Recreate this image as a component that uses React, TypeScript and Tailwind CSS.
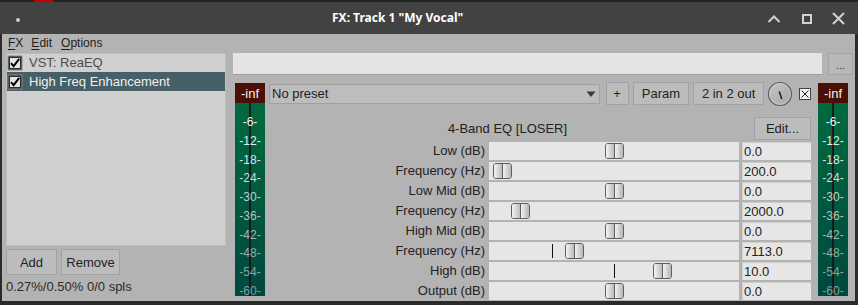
import React from "react";

const meterLabels = ["-6-", "-12-", "-18-", "-24-", "-30-", "-36-", "-42-", "-48-", "-54-", "-60-"];
const meterColors = ["#eef3f0", "#e6eee9", "#dbe6e0", "#cfdcd6", "#c1d1ca", "#b2c4bd", "#a3b7b0", "#96aca5", "#8ca39c", "#869d96"];

function Meter() {
  return (
    <div className="w-[30px] h-[213px] flex flex-col shrink-0">
      <div className="h-[20px] bg-[#4a0f05] text-[#f2f2f2] text-[13px] leading-none flex items-center justify-center">-inf</div>
      <div className="relative flex-1 bg-gradient-to-b from-[#006a3f] to-[#00483f]">
        <div className="absolute left-[14px] top-0 bottom-0 w-[2px] bg-[#1a1a1a]" />
        <div className="absolute left-0 right-0 top-[13px] bottom-[-1px] flex flex-col justify-between items-center">
          {meterLabels.map((l, i) => (
            <div key={l} className="text-[12px] leading-[12px] h-[12px]" style={{ color: meterColors[i] }}>
              {l}
            </div>
          ))}
        </div>
      </div>
    </div>
  );
}

function CheckBox() {
  return (
    <svg width="16" height="16" viewBox="0 0 16 16" className="shrink-0">
      <rect x="0.5" y="0.5" width="15" height="15" fill="#8a8a8a" />
      <rect x="1.5" y="1.5" width="13" height="13" fill="#2e2e2e" />
      <rect x="3" y="3" width="10" height="10" fill="#e4e4e4" />
      <path d="M4 8.2 L6.6 11.2 L12.2 3.8" stroke="#000" strokeWidth="2" fill="none" />
    </svg>
  );
}

type Row = { label: string; value: string; thumb: number; tick?: number };
const rows: Row[] = [
  { label: "Low (dB)", value: "0.0", thumb: 125 },
  { label: "Frequency (Hz)", value: "200.0", thumb: 13 },
  { label: "Low Mid (dB)", value: "0.0", thumb: 125 },
  { label: "Frequency (Hz)", value: "2000.0", thumb: 31 },
  { label: "High Mid (dB)", value: "0.0", thumb: 125 },
  { label: "Frequency (Hz)", value: "7113.0", thumb: 85, tick: 63 },
  { label: "High (dB)", value: "10.0", thumb: 173, tick: 125 },
  { label: "Output (dB)", value: "0.0", thumb: 125 },
];

function Thumb({ center }: { center: number }) {
  return (
    <div
      className="absolute top-[1px] h-[16px] w-[19px] rounded-[3px] border border-[#5e5e5e] flex overflow-hidden"
      style={{ left: center - 9.5 }}
    >
      <div className="flex-1 bg-gradient-to-r from-[#f4f4f4] to-[#bdbdbd]" />
      <div className="w-[1px] bg-[#5e5e5e]" />
      <div className="flex-1 bg-gradient-to-r from-[#f4f4f4] to-[#b5b5b5]" />
    </div>
  );
}

function Button({ children, className }: { children: React.ReactNode; className: string }) {
  return (
    <div
      className={
        "bg-[#bcbcbc] border border-[#a2a2a2] text-[#222] text-[13px] flex items-center justify-center leading-none " +
        className
      }
    >
      {children}
    </div>
  );
}

export default function App() {
  return (
    <div className="w-[858px] h-[305px] bg-[#2b2b2b] flex flex-col overflow-hidden font-['Liberation_Sans',Arial,sans-serif]">
      <div className="h-[2px] bg-[#232323] relative shrink-0">
        <div className="absolute left-[34px] top-0 w-[19px] h-[2px] bg-[#c40000]" />
      </div>
      <div className="h-[32px] bg-[#424242] relative flex items-center pl-[332px] shrink-0">
        <div className="absolute left-[16px] top-[16px] w-[4px] h-[4px] rounded-full bg-[#cfcfcf]" />
        <div className="text-white font-bold text-[12px] font-['Noto_Sans',sans-serif]">FX: Track 1 "My Vocal"</div>
        <svg className="absolute left-[766px] top-[10px]" width="16" height="14" viewBox="0 0 16 14">
          <path d="M2.5 10 L8 4.5 L13.5 10" stroke="#d2d2d2" strokeWidth="2" fill="none" />
        </svg>
        <svg className="absolute left-[800px] top-[10px]" width="14" height="14" viewBox="0 0 14 14">
          <rect x="3" y="3" width="8" height="8" stroke="#d2d2d2" strokeWidth="2" fill="none" />
        </svg>
        <svg className="absolute left-[831px] top-[9px]" width="15" height="15" viewBox="0 0 15 15">
          <path d="M2 2 L13 13 M13 2 L2 13" stroke="#d2d2d2" strokeWidth="2" fill="none" />
        </svg>
      </div>
      <div className="flex-1 bg-[#b3b3b3] ml-[2px] mr-[3px] mb-[4px] flex flex-col">
        <div className="h-[17px] flex items-center text-[12px] text-[#1e1e1e] leading-none">
          <span className="ml-[6px]"><span className="underline underline-offset-2">F</span>X</span>
          <span className="ml-[8px]"><span className="underline underline-offset-2">E</span>dit</span>
          <span className="ml-[9px]"><span className="underline underline-offset-2">O</span>ptions</span>
        </div>
        <div className="flex mt-[2px] pl-[4px] pr-[2px] gap-[7px] flex-1">
          {/* left column */}
          <div className="w-[220px] flex flex-col shrink-0">
            <div className="h-[193px] bg-[#d0d0d0] border border-[#bdbdbd] flex flex-col text-[13px]">
              <div className="h-[18px] flex items-center pl-[0px]">
                <CheckBox />
                <span className="ml-[6px] text-[#4c4c4c]">VST: ReaEQ</span>
              </div>
              <div className="h-[19px] flex items-center bg-[#475f66]">
                <CheckBox />
                <span className="ml-[6px] text-[#f0f0f0]">High Freq Enhancement</span>
              </div>
            </div>
            <div className="flex gap-[4px] mt-[3px] h-[26px]">
              <Button className="w-[51px]">Add</Button>
              <Button className="w-[59px]">Remove</Button>
            </div>
            <div className="mt-[4px] text-[13px] leading-[16px] text-[#2a2a2a]">0.27%/0.50% 0/0 spls</div>
          </div>
          {/* right area */}
          <div className="flex-1 flex flex-col">
            <div className="flex h-[22px] gap-[6px]">
              <div className="flex-1 bg-[#e4e4e4] border-b border-[#9c9c9c]" />
              <div className="w-[25px] bg-[#b8b8b8] border border-[#a4a4a4] text-[#333] text-[11px] flex items-end justify-center pb-[3px] leading-none">...</div>
            </div>
            <div className="flex mt-[7px]">
              <div className="ml-[2px] mt-[1px]">
                <Meter />
              </div>
              <div className="w-[542px] ml-[4px] flex flex-col">
                {/* preset row */}
                <div className="h-[23px] flex items-center">
                  <div className="w-[332px] h-[20px] bg-[#bdbdbd] border border-[#a0a0a0] flex items-center pl-[2px] text-[13px] text-[#222] relative">
                    No preset
                    <svg className="absolute right-[3px] top-[6px]" width="10" height="7" viewBox="0 0 10 7">
                      <path d="M0.5 0.5 L9.5 0.5 L5 6 Z" fill="#3a3a3a" />
                    </svg>
                  </div>
                  <Button className="w-[23px] h-[23px] ml-[6px]">+</Button>
                  <Button className="w-[57px] h-[23px] ml-[4px]">Param</Button>
                  <Button className="w-[71px] h-[23px] ml-[4px]">2 in 2 out</Button>
                  <svg className="ml-[3px] shrink-0" width="26" height="26" viewBox="0 0 26 26">
                    <defs>
                      <linearGradient id="kg" x1="0" y1="0" x2="1" y2="1">
                        <stop offset="0" stopColor="#c6c6c6" />
                        <stop offset="1" stopColor="#a6a6a6" />
                      </linearGradient>
                    </defs>
                    <circle cx="13" cy="13" r="11.5" fill="url(#kg)" stroke="#5c5c5c" strokeWidth="1.2" />
                    <circle cx="13" cy="13" r="10.3" fill="none" stroke="#cfcfcf" strokeWidth="0.8" />
                    <path d="M12.3 10.5 L14.8 18" stroke="#1e1e1e" strokeWidth="1.5" />
                  </svg>
                  <svg className="ml-[6px] shrink-0" width="12" height="12" viewBox="0 0 12 12">
                    <rect x="0.5" y="0.5" width="11" height="11" fill="#f2f2f2" stroke="#444" />
                    <path d="M2.5 2.5 L9.5 9.5 M9.5 2.5 L2.5 9.5" stroke="#222" strokeWidth="1" />
                  </svg>
                </div>
                {/* header */}
                <div className="h-[23px] flex mt-[12px]">
                  <div className="flex-1 flex items-center justify-center pr-[8px] text-[13px] text-[#222]">4-Band EQ [LOSER]</div>
                  <Button className="w-[57px]">Edit...</Button>
                </div>
                {/* rows */}
                <div className="flex flex-col gap-[2px] mt-[2px]">
                  {rows.map((r, i) => (
                    <div key={i} className="h-[18px] flex">
                      <div className="w-[220px] pr-[4px] text-right text-[13px] leading-[18px] text-[#222]">{r.label}</div>
                      <div className="w-[250px] bg-[#e6e6e6] relative">
                        {r.tick !== undefined && (
                          <div className="absolute top-[2px] w-[1px] h-[14px] bg-[#111]" style={{ left: r.tick }} />
                        )}
                        <Thumb center={r.thumb} />
                      </div>
                      <div className="w-[69px] ml-[3px] bg-[#e6e6e6] border-t border-l border-[#cfcfcf] pl-[1px] text-[13px] leading-[17px] text-[#222]">
                        {r.value}
                      </div>
                    </div>
                  ))}
                </div>
              </div>
              <div className="ml-[7px] mt-[1px]">
                <Meter />
              </div>
            </div>
          </div>
        </div>
      </div>
    </div>
  );
}
